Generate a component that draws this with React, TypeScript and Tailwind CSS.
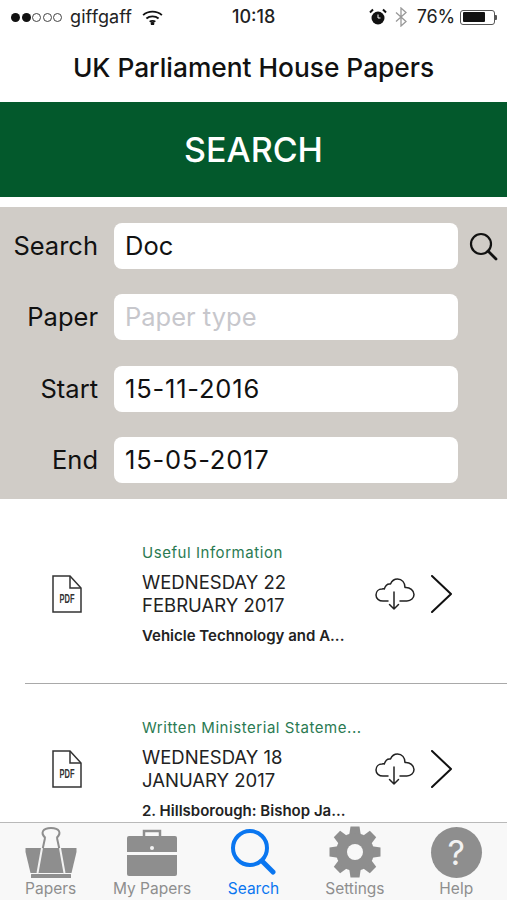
function PdfIcon() {
  return (
    <svg width="30" height="38" viewBox="0 0 30 38" fill="none" stroke="#333" strokeWidth="1.5" className="shrink-0">
      <path d="M1 1h17l11 12v24H1z" />
      <path d="M18 1v12h11" />
      <text x="15" y="28" textAnchor="middle" fontSize="12" fontWeight="700" fill="#333" stroke="none" fontFamily="'Liberation Sans', sans-serif" textLength="15" lengthAdjust="spacingAndGlyphs">PDF</text>
    </svg>
  );
}

function CloudIcon() {
  return (
    <svg width="40" height="34" viewBox="0 0 40 34" fill="none" stroke="#222" strokeWidth="1.5" strokeLinecap="round" strokeLinejoin="round" className="shrink-0">
      <path d="M13 24H8C4 24 1 21.500 1 18c0-3.500 2.500-6 6-6 .8-.2 1.500-.3 2.300 0C10.500 8 13 6.500 15.500 7 17 3.500 20 2 22.500 2 27 2 30 5.500 30 10.500c5-.5 9 3 9 7 0 3.500-3 6.500-7 6.500h-7" />
      <path d="M19 15v17M14.500 27.500 19 32l4.500-4.500" />
    </svg>
  );
}

function Chevron() {
  return (
    <svg width="22" height="38" viewBox="0 0 22 38" fill="none" stroke="#111" strokeWidth="2" strokeLinecap="round" strokeLinejoin="round" className="shrink-0">
      <path d="M1 1l19 18L1 37" />
    </svg>
  );
}

function PaperRow({ category, date1, date2, title }: { category: string; date1: string; date2: string; title: string }) {
  return (
    <div className="flex items-center h-[138px] pl-[52px] relative">
      <PdfIcon />
      <div className="ml-[60px] w-[233px] shrink-0">
        <p className="text-[15px] leading-[18px] text-[#2a7a52] tracking-[0.55px] whitespace-nowrap">{category}</p>
        <p className="mt-[9px] text-[18.500px] leading-[23px] text-[#222] whitespace-nowrap">{date1}</p>
        <p className="text-[18.500px] leading-[23px] text-[#222] whitespace-nowrap">{date2}</p>
        <p className="mt-[10px] text-[15px] leading-[18px] font-semibold text-[#222] whitespace-nowrap">{title}</p>
      </div>
      <CloudIcon />
      <div className="ml-[16px]">
        <Chevron />
      </div>
    </div>
  );
}

function Field({ label, value, placeholder, date }: { label: string; value?: string; placeholder?: string; date?: boolean }) {
  return (
    <div className="flex items-center">
      <span className="w-[98px] text-right text-[25.500px] leading-[30px] text-[#111] shrink-0">{label}</span>
      <div className="ml-4 w-[344px] h-[46px] bg-white rounded-[8px] px-[11px] flex items-center text-[25.500px]">
        {value ? (
          <span className={`text-[#111] ${date ? 'tracking-[0.8px]' : ''}`}>{value}</span>
        ) : (
          <span className="text-[#c7c7cc]">{placeholder}</span>
        )}
      </div>
    </div>
  );
}

function TabItem({ label, active, icon }: { label: string; active?: boolean; icon: React.ReactNode }) {
  return (
    <div className="w-[101.400px] flex flex-col items-center">
      <div className="h-[52px] flex items-center justify-center">{icon}</div>
      <span className={`mt-[2px] text-[15.500px] leading-[18px] ${active ? 'text-[#0a76f0]' : 'text-[#8e8e8e]'}`}>{label}</span>
    </div>
  );
}

const gearTeeth = [0, 45, 90, 135, 180, 225, 270, 315];

export default function App() {
  return (
    <div className="w-[507px] h-[900px] bg-white flex flex-col overflow-hidden font-['Inter',sans-serif]">
      {/* Status bar */}
      <div className="h-[34px] shrink-0 relative flex items-center justify-between pl-[11px] pr-[10px] text-[#222]">
        <div className="flex items-center">
          <div className="flex items-center gap-[1.500px]">
            <span className="size-[9px] rounded-full bg-[#111]" />
            <span className="size-[9px] rounded-full bg-[#111]" />
            <span className="size-[9px] rounded-full border border-[#444]" />
            <span className="size-[9px] rounded-full border border-[#444]" />
            <span className="size-[9px] rounded-full border border-[#444]" />
          </div>
          <span className="ml-[8px] text-[18px] leading-[22px] tracking-[0.1px]">giffgaff</span>
          <svg width="21" height="15" viewBox="0 0 22 16" className="ml-[10px]" fill="none" stroke="#111" strokeWidth="2">
            <path d="M1 5.500c5.500-5 14.500-5 20 0" />
            <path d="M4.500 9c3.500-3 9.500-3 13 0" />
            <path d="M8 12.500c1.500-1.200 4.500-1.200 6 0" />
            <circle cx="11" cy="14.500" r="1" fill="#111" />
          </svg>
        </div>
        <span className="absolute left-[232px] top-[6px] text-[18px] leading-[22px] font-medium">10:18</span>
        <div className="flex items-center">
          <svg width="18" height="18" viewBox="0 0 18 18" fill="#111">
            <circle cx="9" cy="10" r="6.500" />
            <path d="M1 4.500 4 1.500M17 4.500 14 1.500" stroke="#111" strokeWidth="2" />
            <path d="M9 6.500V10h2.500" stroke="#fff" strokeWidth="1" fill="none" />
          </svg>
          <svg width="12" height="20" viewBox="0 0 12 20" fill="none" stroke="#999" strokeWidth="1.300" className="ml-[8px]">
            <path d="M1 5.500l10 9-5 4.500V1l5 4.500-10 9" />
          </svg>
          <span className="ml-[10px] text-[18px] leading-[22px] tracking-[-0.2px]">76%</span>
          <div className="ml-[5px] w-[35px] h-[15px] border border-[#555] rounded-[3px] p-[1.500px]">
            <div className="h-full w-[76%] bg-[#111] rounded-[1px]" />
          </div>
          <div className="w-[2px] h-[5px] bg-[#555] rounded-r-[1px]" />
        </div>
      </div>

      {/* Title */}
      <div className="h-[68px] shrink-0 flex items-center justify-center">
        <h1 className="text-[26.300px] leading-[30px] font-medium text-[#111]">UK Parliament House Papers</h1>
      </div>

      {/* Green heading */}
      <div className="h-[95px] shrink-0 bg-[#03592c] flex items-center justify-center">
        <h2 className="text-[34px] font-medium text-white">SEARCH</h2>
      </div>

      {/* Search form */}
      <div className="mt-[10px] h-[292px] shrink-0 bg-[#d0ccc7] pt-[16px] flex flex-col gap-[25.330px] relative">
        <Field label="Search" value="Doc" />
        <Field label="Paper" placeholder="Paper type" />
        <Field label="Start" value="15-11-2016" date />
        <Field label="End" value="15-05-2017" date />
        <svg width="30" height="30" viewBox="0 0 30 30" fill="none" stroke="#111" strokeWidth="2.200" strokeLinecap="round" className="absolute left-[469px] top-[25px]">
          <circle cx="12" cy="12" r="10" />
          <path d="M19 19l8 8" strokeWidth="2.800" />
        </svg>
      </div>

      {/* List */}
      <div className="flex-1 min-h-0 overflow-hidden pt-[26px]">
        <PaperRow category="Useful Information" date1="WEDNESDAY 22" date2="FEBRUARY 2017" title="Vehicle Technology and A..." />
        <div className="ml-[25px] h-px bg-[#a9a9a9] mt-[20px] mb-[16px]" />
        <PaperRow category="Written Ministerial Stateme..." date1="WEDNESDAY 18" date2="JANUARY 2017" title="2. Hillsborough: Bishop Ja..." />
      </div>

      {/* Tab bar */}
      <div className="h-[78px] shrink-0 bg-[#f8f8f8] border-t border-[#b9b9b9] flex pt-[3px]">
        <TabItem
          label="Papers"
          icon={
            <svg width="52" height="52" viewBox="0 0 52 52" fill="#8e8e8e">
              <path d="M0.500 22h51v4l-5 21H5.500L0.500 26z" />
              <rect x="6" y="48" width="40" height="4" rx="0.500" />
              <path d="M20.500 12C15 7 17.500 2 26 2s11 5 5.500 10" fill="none" stroke="#8e8e8e" strokeWidth="2" />
              <path d="M20 12 12.500 47M32 12l7.500 35" fill="none" stroke="#8e8e8e" strokeWidth="2" />
              <path d="M17 22l-4.500 25M35 22l4.500 25" fill="none" stroke="#f2f2f2" strokeWidth="2" />
            </svg>
          }
        />
        <TabItem
          label="My Papers"
          icon={
            <svg width="52" height="52" viewBox="0 0 52 52" fill="#8e8e8e">
              <path d="M18 10V5h16v5" fill="none" stroke="#8e8e8e" strokeWidth="2.500" />
              <path d="M3 10h46a2 2 0 0 1 2 2v14H1V12a2 2 0 0 1 2-2z" />
              <path d="M1 29h50v19a2 2 0 0 1-2 2H3a2 2 0 0 1-2-2z" />
              <circle cx="26" cy="22" r="2" fill="#f2f2f2" />
            </svg>
          }
        />
        <TabItem
          active
          label="Search"
          icon={
            <svg width="46" height="48" viewBox="0 0 46 48" fill="none" stroke="#0a76f0" strokeLinecap="round">
              <circle cx="20" cy="20" r="17" strokeWidth="4" />
              <path d="M32 33l11 11" strokeWidth="5" />
            </svg>
          }
        />
        <TabItem
          label="Settings"
          icon={
            <svg width="52" height="52" viewBox="0 0 52 52" fill="#8e8e8e">
              {gearTeeth.map((angle) => (
                <path key={angle} d="M21.500 0.500h9l1.500 10h-12z" transform={`rotate(${angle} 26 26)`} />
              ))}
              <circle cx="26" cy="26" r="19" />
              <circle cx="26" cy="26" r="8" fill="#f8f8f8" />
            </svg>
          }
        />
        <TabItem
          label="Help"
          icon={
            <div className="size-[51px] rounded-full bg-[#8e8e8e] flex items-center justify-center text-[34px] text-[#f2f2f2]">?</div>
          }
        />
      </div>
    </div>
  );
}
